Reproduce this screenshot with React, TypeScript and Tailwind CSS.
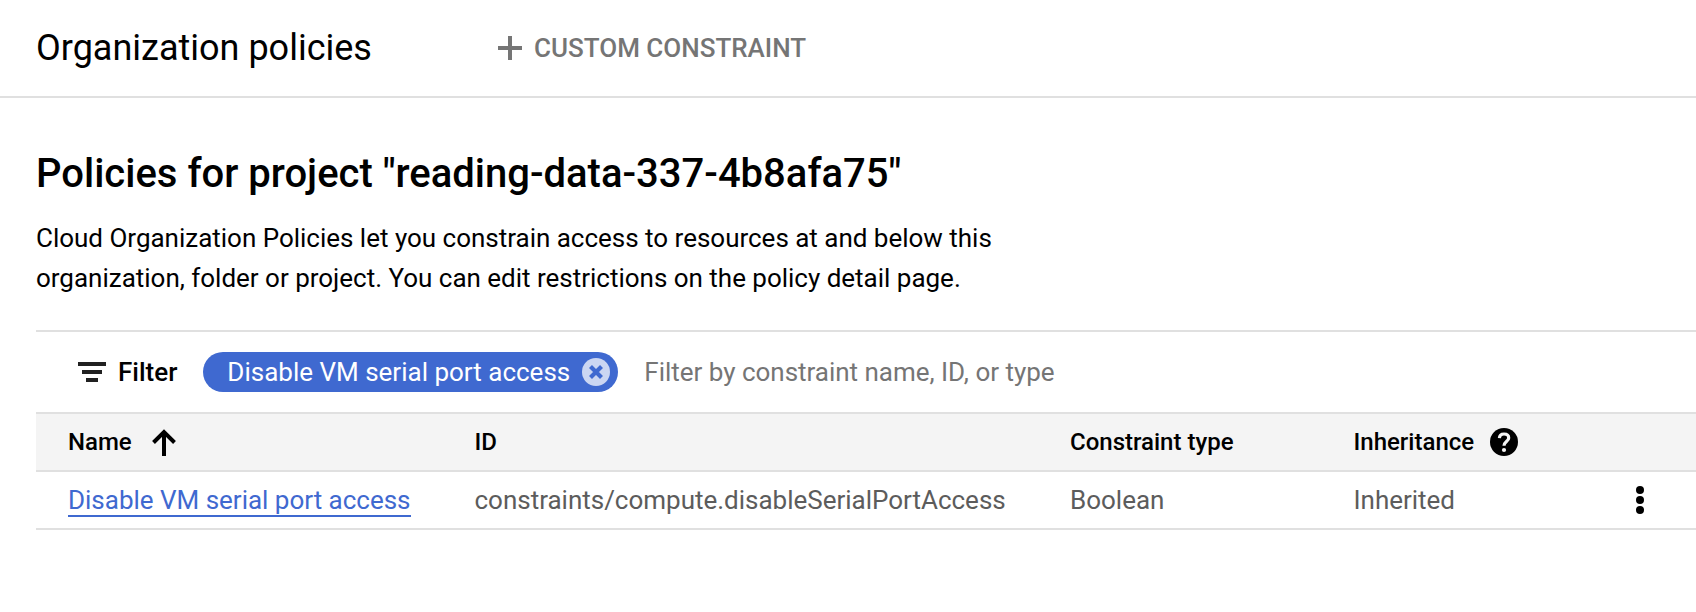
import React from 'react';

const heads = 'text-[24px] leading-[32px] font-medium';

export default function App() {
  return (
    <div className="h-[612px] w-[1696px] overflow-hidden bg-white font-[Roboto,sans-serif] text-black">
      <header className="flex h-[98px] items-center border-b-2 border-[#e0e0e0] pl-9">
        <h1 className="w-[458px] text-[36px] leading-[48px] whitespace-nowrap">Organization policies</h1>
        <button className="flex items-center gap-2 text-[26px] leading-[36px] font-medium whitespace-nowrap text-[#757575]">
          <svg width="32" height="32" viewBox="0 0 32 32" fill="none" stroke="#757575" strokeWidth="4"><path d="M16 4v24M4 16h24" /></svg>
          CUSTOM CONSTRAINT
        </button>
      </header>
      <main className="pl-9">
        <h2 className="pt-[52px] text-[40px] leading-[48px] font-medium whitespace-nowrap">Policies for project "reading-data-337-4b8afa75"</h2>
        <p className="mt-5 text-[26px] leading-[40px] tracking-[-0.012px] whitespace-nowrap">
          Cloud Organization Policies let you constrain access to resources at and below this<br />
          organization, folder or project. You can edit restrictions on the policy detail page.
        </p>
        <div className="mt-[32px] flex h-[82px] items-center border-t-2 border-[#e0e0e0] pl-[42px] text-[26px] whitespace-nowrap">
          <svg width="28" height="20" viewBox="0 0 28 20" fill="#212121"><path d="M0 0h28v4H0zM4 8h20v4H4zM8 16h12v4H8z" /></svg>
          <span className="ml-3 font-medium">Filter</span>
          <span className="ml-[26px] flex h-10 w-[415px] items-center justify-between rounded-full bg-[#3f69d0] pr-2 pl-6 text-white">
            Disable VM serial port access
            <svg width="28" height="28" viewBox="0 0 28 28"><circle cx="14" cy="14" r="14" fill="#cbd6f2" /><path d="M8.500 8.500l11 11M19.500 8.500l-11 11" stroke="#3f69d0" strokeWidth="4.200" /></svg>
          </span>
          <span className="ml-[26px] tracking-[-0.02px] text-[#757575]">Filter by constraint name, ID, or type</span>
        </div>
        <div className="grid h-[60px] grid-cols-[438.5px_595.5px_283.5px_1fr] items-center border-y-2 border-[#e0e0e0] bg-[#f4f4f4] whitespace-nowrap">
          <div className="flex items-center gap-5 pl-8"><span className={heads}>Name</span><svg width="24" height="28" viewBox="0 0 24 28" fill="none" stroke="black" strokeWidth="4"><path d="M12 28V4M1.500 14.500L12 4l10.500 10.500" /></svg></div>
          <span className={heads}>ID</span>
          <span className={heads}>Constraint type</span>
          <div className="flex items-center gap-4"><span className={heads}>Inheritance</span><svg width="28" height="28" viewBox="0 0 28 28" fill="none"><circle cx="14" cy="14" r="14" fill="black" /><path d="M9.400 10.100C9.500 7.500 11.400 6 14 6c2.800 0 4.700 1.500 4.700 3.900 0 3.600-4.700 3.800-4.700 7.900" stroke="#f4f4f4" strokeWidth="3.200" /><circle cx="14" cy="22" r="2.100" fill="#f4f4f4" /></svg></div>
        </div>
        <div className="grid h-[58px] grid-cols-[438.5px_595.5px_283.5px_1fr] items-center border-b-2 border-[#e0e0e0] text-[26px] leading-[32px] tracking-[-0.012px] whitespace-nowrap text-[#5c5c5c]">
          <div className="pl-8"><a className="block w-fit border-b-2 border-[#3f69d0] pt-[2px] leading-[30px] text-[#3f69d0]">Disable VM serial port access</a></div>
          <span>constraints/compute.disableSerialPortAccess</span>
          <span>Boolean</span>
          <div className="flex items-center justify-between pr-[52px]"><span>Inherited</span><svg width="8" height="28" viewBox="0 0 8 28"><circle cx="4" cy="4" r="4" /><circle cx="4" cy="14" r="4" /><circle cx="4" cy="24" r="4" /></svg></div>
        </div>
      </main>
    </div>
  );
}
